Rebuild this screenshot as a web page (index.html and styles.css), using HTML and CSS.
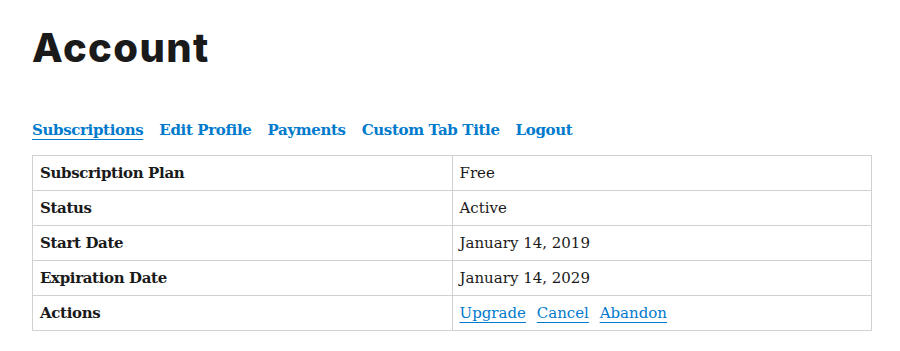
FILE: index.html
```html
<!DOCTYPE html>
<html lang="en">
<head>
    <meta charset="UTF-8">
    <meta name="viewport" content="width=device-width, initial-scale=1.0">
    <title>Account</title>
    <link rel="stylesheet" href="styles.css">
</head>
<body>
    <div class="page">
        <h1 class="page-title">Account</h1>

        <ul class="tabs">
            <li><a href="#" class="tab active">Subscriptions</a></li>
            <li><a href="#" class="tab">Edit Profile</a></li>
            <li><a href="#" class="tab">Payments</a></li>
            <li><a href="#" class="tab">Custom Tab Title</a></li>
            <li><a href="#" class="tab">Logout</a></li>
        </ul>

        <table class="account-table">
            <tr>
                <th>Subscription Plan</th>
                <td>Free</td>
            </tr>
            <tr>
                <th>Status</th>
                <td>Active</td>
            </tr>
            <tr>
                <th>Start Date</th>
                <td>January 14, 2019</td>
            </tr>
            <tr>
                <th>Expiration Date</th>
                <td>January 14, 2029</td>
            </tr>
            <tr>
                <th>Actions</th>
                <td class="actions">
                    <a href="#">Upgrade</a>
                    <a href="#">Cancel</a>
                    <a href="#">Abandon</a>
                </td>
            </tr>
        </table>
    </div>
</body>
</html>
```

FILE: styles.css
```css
body {
    margin: 0;
    padding: 0;
    background: #fff;
    color: #1a1a1a;
    font-family: "DejaVu Serif", serif;
    font-size: 15px;
}

.page {
    padding: 0 28px 0 32px;
}

.page-title {
    font-family: "Inter", sans-serif;
    font-weight: 800;
    font-size: 40px;
    line-height: 1;
    margin: 0;
    padding-top: 28px;
    letter-spacing: 1.4px;
}

.tabs {
    list-style: none;
    margin: 0;
    padding: 0;
    margin-top: 50px;
    display: flex;
    gap: 16px;
}

.tab {
    color: #007acc;
    font-weight: 700;
    text-decoration: none;
    line-height: 24px;
    letter-spacing: -0.35px;
}

.tab.active {
    text-decoration: underline;
    text-underline-offset: 4px;
}

.account-table {
    width: 100%;
    margin-top: 13px;
    border-collapse: collapse;
}

.account-table th,
.account-table td {
    border: 1px solid #d1d1d1;
    height: 34px;
    padding: 0 7px;
    text-align: left;
    width: 50%;
}

.account-table th {
    font-weight: 700;
    letter-spacing: -0.35px;
}

.actions a {
    color: #007acc;
    text-decoration: underline;
    text-underline-offset: 4px;
    margin-right: 6px;
}
```
